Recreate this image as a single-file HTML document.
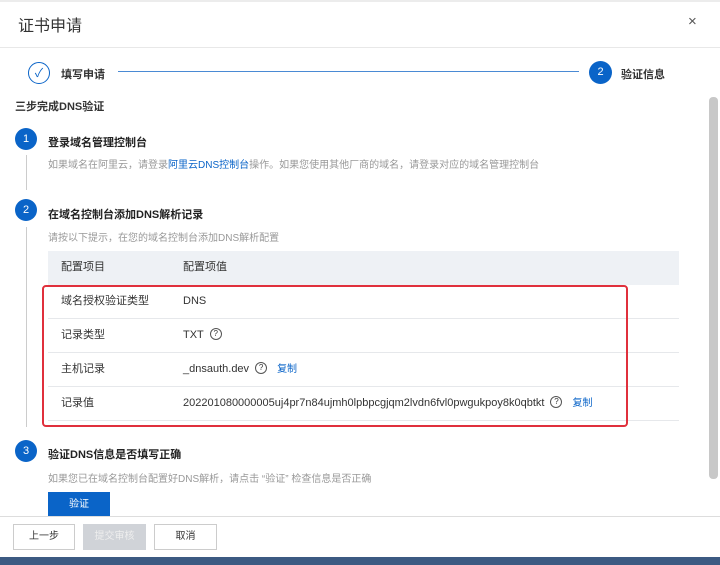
<!DOCTYPE html>
<html><head><meta charset="utf-8"><style>
*{margin:0;padding:0;box-sizing:border-box}
body{width:720px;height:565px;overflow:hidden;background:#fff;font-family:"Liberation Sans","Noto Sans CJK SC",sans-serif;position:relative;color:#333}
.a{position:absolute;white-space:nowrap}
.circ{position:absolute;width:22px;height:22px;border-radius:50%;background:#0a64c8;color:#fff;font-size:11px;text-align:center;line-height:22px}
.t{font-size:11px;font-weight:bold;color:#222}
.g{font-size:10px;color:#999}
.row{position:absolute;left:48px;width:631px;height:34px;border-bottom:1px solid #e6e8eb;font-size:11px;color:#333;line-height:33px}
.row span.c{position:absolute;top:0}
.q{display:inline-block;width:12px;height:12px;border:1px solid #555;border-radius:50%;font-size:8px;font-style:normal;text-align:center;line-height:10px;vertical-align:middle;margin-left:6px;margin-top:-2px}
.lk{color:#0a64c8;font-size:10px;margin-left:10px}
.btn{position:absolute;top:524px;height:26px;border:1px solid #ccc;font-size:10px;text-align:center;line-height:24px;color:#333;background:#fff}
</style></head><body>
<div class="a" style="left:0;top:0;width:720px;height:2px;background:#ececec"></div>
<div class="a" style="left:18px;top:12px;font-size:16px;color:#333">证书申请</div>
<div class="a" style="left:688px;top:13px;font-size:15px;color:#555">×</div>
<div class="a" style="left:0;top:47px;width:720px;height:1px;background:#e8e8e8"></div>
<div class="a" style="left:28px;top:62px;width:22px;height:22px;border:1px solid #0a64c8;border-radius:50%;color:#0a64c8;font-size:12px;text-align:center;line-height:20px">✓</div>
<div class="a" style="left:61px;top:66px;font-size:11px;font-weight:bold">填写申请</div>
<div class="a" style="left:118px;top:71px;width:461px;height:1px;background:#4a8ad4"></div>
<div class="circ" style="left:589px;top:61px;width:23px;height:23px;line-height:23px">2</div>
<div class="a" style="left:621px;top:66px;font-size:11px;font-weight:bold">验证信息</div>
<div class="a" style="left:15px;top:98px;font-size:11px;font-weight:bold">三步完成DNS验证</div>
<div class="a" style="left:709px;top:97px;width:9px;height:382px;background:#c8c8c8;border-radius:4px"></div>
<div class="a" style="left:26px;top:155px;width:1px;height:35px;background:#ccc"></div>
<div class="a" style="left:26px;top:227px;width:1px;height:200px;background:#ccc"></div>
<div class="circ" style="left:15px;top:128px">1</div>
<div class="a t" style="left:48px;top:134px">登录域名管理控制台</div>
<div class="a g" style="left:48px;top:156px">如果域名在阿里云，请登录<span style="color:#0a64c8">阿里云DNS控制台</span>操作。如果您使用其他厂商的域名，请登录对应的域名管理控制台</div>
<div class="circ" style="left:15px;top:199px">2</div>
<div class="a t" style="left:48px;top:206px">在域名控制台添加DNS解析记录</div>
<div class="a g" style="left:48px;top:229px">请按以下提示，在您的域名控制台添加DNS解析配置</div>
<div class="row" style="top:251px;background:#eef1f5;border:none"><span class="c" style="left:13px">配置项目</span><span class="c" style="left:135px">配置项值</span></div>
<div class="row" style="top:285px"><span class="c" style="left:13px">域名授权验证类型</span><span class="c" style="left:135px">DNS</span></div>
<div class="row" style="top:319px"><span class="c" style="left:13px">记录类型</span><span class="c" style="left:135px">TXT<i class="q">?</i></span></div>
<div class="row" style="top:353px"><span class="c" style="left:13px">主机记录</span><span class="c" style="left:135px">_dnsauth.dev<i class="q">?</i><span class="lk">复制</span></span></div>
<div class="row" style="top:387px"><span class="c" style="left:13px">记录值</span><span class="c" style="left:135px">202201080000005uj4pr7n84ujmh0lpbpcgjqm2lvdn6fvl0pwgukpoy8k0qbtkt<i class="q">?</i><span class="lk">复制</span></span></div>
<div class="a" style="left:42px;top:285px;width:586px;height:142px;border:2px solid #e0303c;border-radius:4px"></div>
<div class="circ" style="left:15px;top:440px">3</div>
<div class="a t" style="left:48px;top:446px">验证DNS信息是否填写正确</div>
<div class="a g" style="left:48px;top:470px">如果您已在域名控制台配置好DNS解析，请点击 “验证” 检查信息是否正确</div>
<div class="a" style="left:48px;top:492px;width:62px;height:25px;background:#0a64c8;color:#fff;font-size:10px;text-align:center;line-height:25px">验证</div>
<div class="a" style="left:0;top:516px;width:720px;height:41px;background:#fff;border-top:1px solid #ddd"></div>
<div class="btn" style="left:13px;width:62px">上一步</div>
<div class="btn" style="left:83px;width:63px;background:#d0d3d8;border-color:#d0d3d8;color:#eee">提交审核</div>
<div class="btn" style="left:154px;width:63px">取消</div>
<div class="a" style="left:0;top:557px;width:720px;height:8px;background:#3c5a82"></div>
</body></html>
